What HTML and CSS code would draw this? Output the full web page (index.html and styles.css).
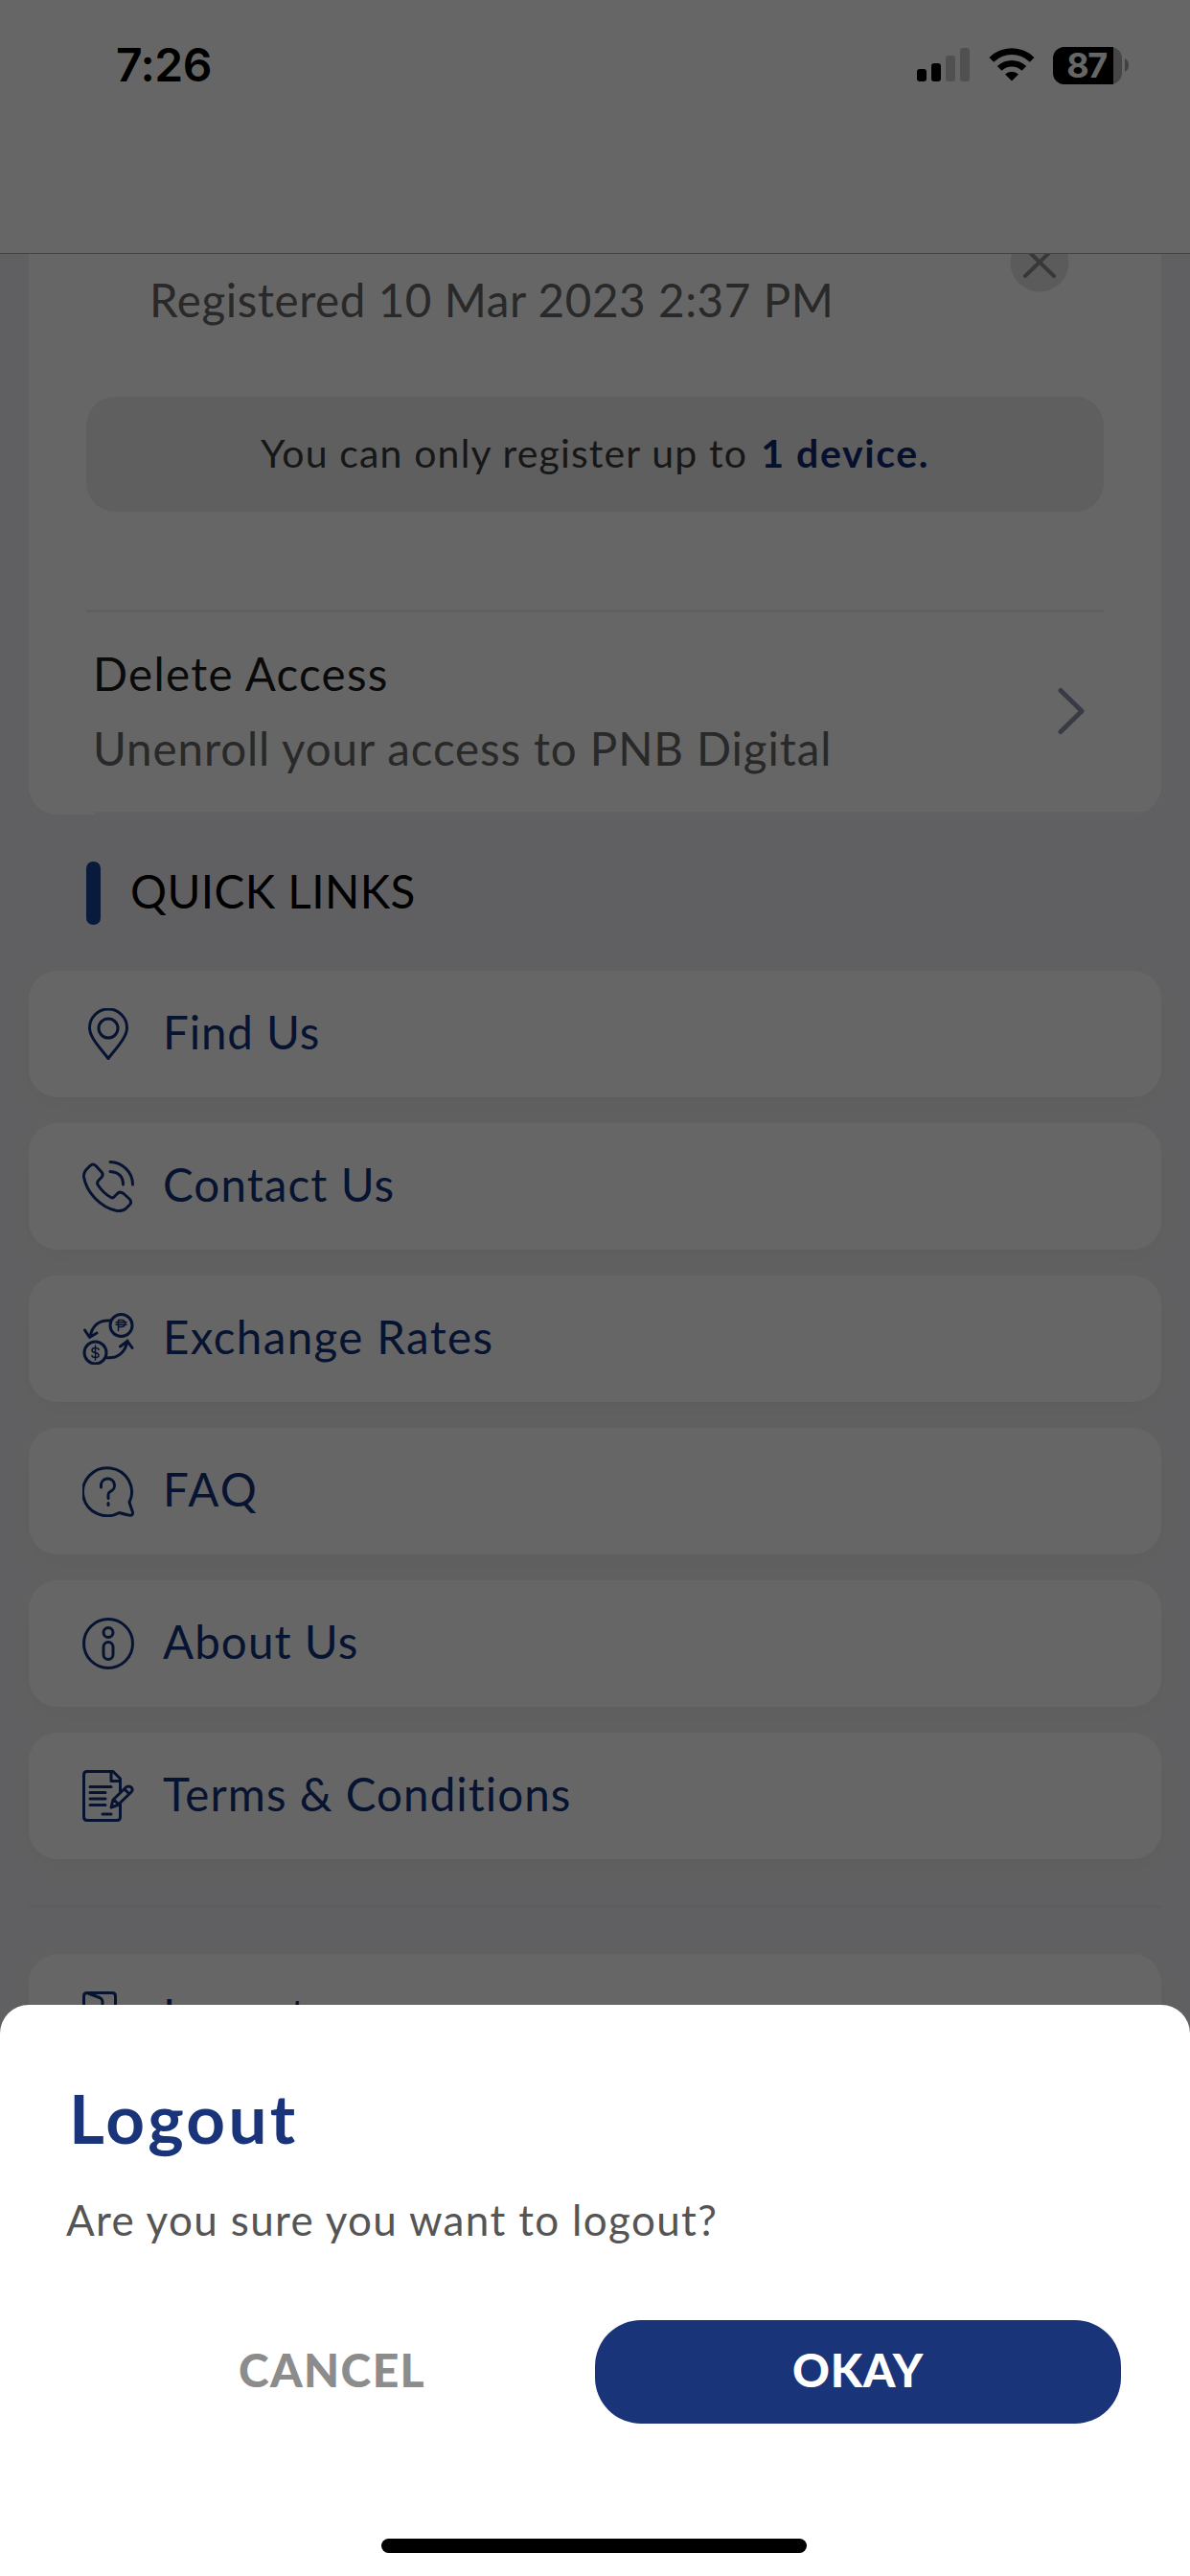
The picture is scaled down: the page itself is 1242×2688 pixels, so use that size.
FILE: index.html
```
<!DOCTYPE html>
<html lang="en">
<head>
<meta charset="utf-8">
<title>Settings</title>
<link rel="stylesheet" href="styles.css">
</head>
<body>
<div class="screen">
  <header class="topbar">
    <div class="statusbar">
      <span class="clock"><span class="t">7:26</span></span>
      <div class="indicators">
        <svg class="signal" width="56" height="36" viewBox="0 0 56 36"><rect x="0" y="22" width="10" height="13" rx="3"/><rect x="15" y="16" width="10" height="19" rx="3"/><rect class="dim" x="30" y="8" width="10" height="27" rx="3"/><rect class="dim" x="45" y="0" width="10" height="35" rx="3"/></svg>
        <svg class="wifi" width="48" height="36" viewBox="0 0 48 36"><path d="M0.500 11 A33.500 33.500 0 0 1 47.500 11 L42.800 15.700 A26.600 26.600 0 0 0 5.200 15.700Z"/><path d="M8.800 20 A22 22 0 0 1 39.200 20 L34.500 24.700 A15 15 0 0 0 13.500 24.700Z"/><path d="M17 28.500 A10 10 0 0 1 31 28.500 L24 35.500Z"/></svg>
        <span class="battery"><span class="level"><span class="t">87</span></span></span>
        <svg class="nub" width="4" height="14" viewBox="0 0 4 14"><path d="M0 0 Q4 2 4 7 Q4 12 0 14Z"/></svg>
      </div>
    </div>
  </header>
  <main class="content">
    <section class="card devices">
      <div class="device">
        <span class="t registered">Registered 10 Mar 2023 2:37 PM</span>
        <svg class="remove" width="62" height="62" viewBox="0 0 62 62"><circle cx="31" cy="31" r="30.500"/><path d="M16 16 46 45M46 16 16 45"/></svg>
      </div>
      <p class="note"><span class="t limit">You can only register up to</span><b class="t count">1 device.</b></p>
      <div class="access">
        <div class="access-text">
          <span class="t access-title">Delete Access</span>
          <span class="t access-sub">Unenroll your access to PNB Digital</span>
        </div>
        <svg class="chevron" width="30" height="50" viewBox="0 0 30 50"><path d="M3 3.500 25 25 3 46.500"/></svg>
      </div>
      <div class="card-edge"></div>
    </section>
    <h2 class="heading"><span class="t">QUICK LINKS</span></h2>
    <nav class="links">
      <a class="link"><svg class="icon" viewBox="0 0 54 54"><path d="M27 52.500C20 43 7.500 31 7.500 20.500A19.500 19.500 0 0 1 46.500 20.500C46.500 31 34 43 27 52.500Z"/><circle cx="27" cy="21" r="10"/></svg><span class="t find">Find Us</span></a>
      <a class="link"><svg class="icon" viewBox="0 0 54 54"><path d="M8 5.500Q11 2.500 14 5.500L20 12Q22.500 15 19.500 18L17 20.500Q14.500 23 16.500 26Q22 34 29 38Q32 40 34 37L36 35Q39 31.500 43 34.500L49 40Q52 43 49.500 46L45 50.500Q42 53 36 52.500C19 49 4 33 1.500 17Q1 13 4 9.500Z"/><path d="M29 1.500C42 2 52.500 12 52.500 25M29 11.500Q42.500 12.500 42.500 25"/></svg><span class="t contact">Contact Us</span></a>
      <a class="link"><svg class="icon" viewBox="0 0 54 54"><circle cx="40.500" cy="13" r="11.500"/><circle cx="13.500" cy="41.500" r="11.500"/><path d="M29 8C17 7 10 14 8 25M2.500 18 7.500 25.500 15 21M25 46.500C37 48 45 41 47 29M39.500 35 47 29.500 52 36.500"/><path class="fine" d="M37.500 18.500V7.500H41Q44.500 7.500 44.500 11T41 14.500H37.500M35 9.800H46M35 12.300H46"/><path class="fine" d="M17 38.500Q17 36.500 13.500 36.500T10 39Q10 41 13.500 41.500T17 44.500Q17 46.500 13.500 46.500T10 44.500M13.500 34V49"/></svg><span class="t exchange">Exchange Rates</span></a>
      <a class="link"><svg class="icon" viewBox="0 0 54 54"><path d="M38.500 49.500A25.500 25 0 1 1 49 38.500Q51 45 52.500 49Q53 53 48.500 52Q43.500 51 38.500 49.500Z"/><path d="M19.500 23V21.500A7 7 0 1 1 29 27.500Q27 28.500 27 30.500V34.500M27 39.500V41.500"/></svg><span class="t faq">FAQ</span></a>
      <a class="link"><svg class="icon" viewBox="0 0 54 54"><circle cx="27" cy="27" r="25.500"/><circle cx="27" cy="15.500" r="5"/><rect x="22" y="25.500" width="10" height="18" rx="5"/></svg><span class="t about">About Us</span></a>
      <a class="link"><svg class="icon" viewBox="0 0 54 54"><path d="M39.500 36V49Q39.500 52.500 36 52.500H5Q1.500 52.500 1.500 49V5Q1.500 1.500 5 1.500H32L39.500 9V22M30 2V11.500H39.500"/><path d="M8 17.500H30M8 23.500H24M8 30H24M8 36.500H24M21 46H30"/><path d="M30 39 32 31 46 17.500Q49 16 51.500 18.500Q53 21 51 23L37 36.500ZM44 20 49 25M33 31 37 35"/></svg><span class="t terms">Terms &amp; Conditions</span></a>
    </nav>
    <hr class="rule">
    <a class="link"><svg class="icon" viewBox="0 0 54 54"><path d="M34.500 18V5Q34.500 1.500 31 1.500H5Q1.500 1.500 1.500 5V43L21 52V11Q21 8 18 6.500L6 2"/><path d="M21 43H34.500V34M30 27H52M45 20 52 27 45 34"/></svg><span class="t logout">Logout</span></a>
  </main>
  <div class="backdrop">
    <section class="sheet">
      <h1 class="t title">Logout</h1>
      <p class="t question">Are you sure you want to logout?</p>
      <div class="actions">
        <button class="button cancel"><span class="t">CANCEL</span></button>
        <button class="button okay"><span class="t">OKAY</span></button>
      </div>
      <div class="home"></div>
    </section>
  </div>
</div>
</body>
</html>
```
FILE: styles.css
```
* { box-sizing: border-box; }
body { margin: 0; font-family: Lato, "Open Sans", sans-serif; }
h1, h2, p { margin: 0; font-weight: 400; }
.t { white-space: nowrap; }

.screen { position: relative; display: flex; flex-direction: column; width: 1242px; height: 2688px; overflow: hidden; background: #f1f1f4; }

.topbar { flex: none; height: 265px; background: #fff; border-bottom: 1px solid #a9a9a9; }
.statusbar { display: flex; justify-content: space-between; height: 136px; padding: 0 64px 0 121px; align-items: center; }
.clock { font: 600 48px/60px Inter, sans-serif; letter-spacing: -.5px; }
.indicators { display: flex; align-items: center; }
.signal { margin-right: 19px; }
.signal .dim { fill: #000; opacity: .22; }
.wifi { margin: 0 19px 3px 0; }
.battery { width: 72px; height: 39px; margin-right: 3px; border-radius: 12px; background: #b0b0b0; }
.level { display: flex; align-items: center; justify-content: center; width: 63px; height: 39px; padding-left: 7px; border-radius: 12px 0 0 12px; background: #000; color: #fff; font: 700 36px/39px Inter, sans-serif; letter-spacing: -1.500px; }
.nub { fill: #a6a6a6; }

.content { display: flex; flex: 1; flex-direction: column; min-height: 0; padding: 0 30px; overflow: hidden; }
.card { background: #fff; border-radius: 0 0 30px 30px; }
.devices { display: flex; flex: none; flex-direction: column; height: 585px; padding: 0 60px; overflow: hidden; }
.device { display: flex; flex: none; justify-content: space-between; height: 149px; padding: 0 36px 0 66px; }
.registered { align-self: flex-start; margin-top: 18px; font-size: 47.500px; line-height: 60px; letter-spacing: .6px; color: #666; }
.remove { margin-top: -22px; }
.remove circle { fill: #e3e3e3; }
.remove path { fill: none; stroke: #8c8c8c; stroke-width: 4; stroke-linecap: round; }
.note { display: flex; flex: none; justify-content: center; gap: 14px; height: 120px; border-radius: 30px; background: #ededed; font-size: 41px; line-height: 118px; color: #3b3b3b; }
.limit { letter-spacing: 1.150px; }
.count { font-weight: 700; letter-spacing: 1.600px; color: #0e2a73; }
.access { display: flex; flex: none; justify-content: space-between; height: 209px; margin-top: 102px; padding: 34px 18px 0 7px; border-top: 3px solid #f0f0f0; }
.access-text { display: flex; flex-direction: column; align-items: flex-start; font-size: 47.500px; line-height: 60px; gap: 18px; color: #191919; }
.access-title { letter-spacing: 1.300px; }
.access-sub { letter-spacing: .9px; color: #666; }
.chevron { margin-top: 44px; fill: none; stroke: #8c94b0; stroke-width: 5; stroke-linecap: round; stroke-linejoin: round; }
.card-edge { flex: none; height: 3px; margin: 2px -60px 0 8px; background: #f2f2f4; }

.heading { display: flex; flex: none; align-items: center; gap: 31px; height: 66px; margin: 49px 60px 48px; font-size: 47.500px; line-height: 60px; letter-spacing: .45px; }
.heading .t { margin-bottom: 4px; }
.heading::before { content: ""; width: 15px; height: 66px; border-radius: 7px; background: #1a4192; }
.links { display: flex; flex: none; flex-direction: column; gap: 27px; }
.link { display: flex; flex: none; align-items: center; gap: 30px; height: 132px; padding: 0 56px; border-radius: 30px; background: #fff; box-shadow: 0 9px 30px rgba(0, 30, 40, .03); font-size: 47.500px; line-height: 60px; color: #12327c; }
.link .t { margin-bottom: 4px; }
.find { letter-spacing: .9px; }
.terms { letter-spacing: 1.050px; }
.contact, .about, .logout { letter-spacing: 1.100px; }
.exchange { letter-spacing: 1.380px; }
.faq { letter-spacing: 2.200px; }
.icon { width: 54px; height: 54px; fill: none; stroke: currentColor; stroke-width: 3; stroke-linecap: round; stroke-linejoin: round; }
.icon .fine { stroke-width: 1.500; }
.rule { flex: none; width: 100%; height: 3px; margin: 48px 0; border: 0; background: #e8e8e8; }

/* modal layer over the whole screen */
.backdrop { position: absolute; inset: 0; display: flex; align-items: flex-end; background: rgba(0, 0, 0, .6); }
.sheet { display: flex; flex-direction: column; align-items: flex-start; width: 100%; height: 596px; padding: 78px 72px 0 69px; border-radius: 30px 30px 0 0; background: #fff; }
.title { margin-left: 3px; font-size: 71px; line-height: 80px; font-weight: 700; letter-spacing: 3.300px; color: #1a3479; }
.question { margin-top: 36px; font-size: 44px; line-height: 60px; letter-spacing: 1.350px; color: #555; }
.actions { display: grid; grid-template-columns: 552px 549px; width: 100%; margin-top: 75px; }
.button { height: 108px; padding: 0 0 4px; border: 0; border-radius: 48px; background: none; font: 900 48px/104px Lato, sans-serif; color: #8c8c8c; }
.cancel { padding-left: 3px; letter-spacing: 1.400px; }
.okay { letter-spacing: .8px; background: #1a3479; color: #fff; }
.home { width: 444px; height: 15px; margin: 120px auto 0; border-radius: 8px; background: #000; }
```
